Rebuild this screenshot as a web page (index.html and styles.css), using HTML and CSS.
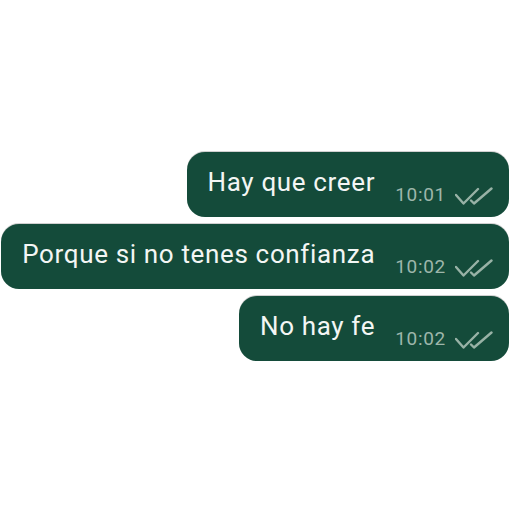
FILE: index.html
```html
<!DOCTYPE html>
<html>
<head>
<meta charset="utf-8">
<link rel="stylesheet" href="styles.css">
</head>
<body>
<div class="chat">
  <div class="bubble">
    <span class="text">Hay que creer</span>
    <span class="meta"><span class="time">10:01</span><svg class="ticks" viewBox="0 0 38 18" width="38" height="18"><polyline points="1,8 8.5,16.5 23,2"/><polyline points="16,13.5 19,16.5 36.5,1.5"/></svg></span>
  </div>
  <div class="bubble">
    <span class="text">Porque si no tenes confianza</span>
    <span class="meta"><span class="time">10:02</span><svg class="ticks" viewBox="0 0 38 18" width="38" height="18"><polyline points="1,8 8.5,16.5 23,2"/><polyline points="16,13.5 19,16.5 36.5,1.5"/></svg></span>
  </div>
  <div class="bubble">
    <span class="text">No hay fe</span>
    <span class="meta"><span class="time">10:02</span><svg class="ticks" viewBox="0 0 38 18" width="38" height="18"><polyline points="1,8 8.5,16.5 23,2"/><polyline points="16,13.5 19,16.5 36.5,1.5"/></svg></span>
  </div>
</div>
</body>
</html>
```

FILE: styles.css
```css
html, body {
  margin: 0;
  padding: 0;
  background: #ffffff;
}
body {
  width: 512px;
  height: 512px;
  overflow: hidden;
  font-family: Roboto, "Liberation Sans", sans-serif;
}
.chat {
  display: flex;
  flex-direction: column;
  align-items: flex-end;
  gap: 7px;
  padding-top: 152px;
  padding-right: 3px;
}
.bubble {
  box-sizing: border-box;
  height: 65px;
  display: flex;
  align-items: flex-start;
  background: #144b3a;
  border-radius: 18px;
  padding: 17px 16px 0 21px;
  box-shadow: 0 -1px 0 rgba(120, 120, 120, 0.35);
}
.text {
  font-size: 26px;
  line-height: 26px;
  letter-spacing: 0.65px;
  color: #f3f6f4;
  white-space: nowrap;
}
.meta {
  display: flex;
  align-items: flex-start;
  margin-left: 20px;
  margin-top: 16px;
}
.time {
  font-size: 19px;
  line-height: 19px;
  letter-spacing: 0.7px;
  color: #9db6aa;
}
.ticks {
  margin-left: 9px;
  margin-top: 2px;
  fill: none;
  stroke: #98b2a6;
  stroke-width: 2.4;
  stroke-linecap: round;
  stroke-linejoin: round;
}
```
